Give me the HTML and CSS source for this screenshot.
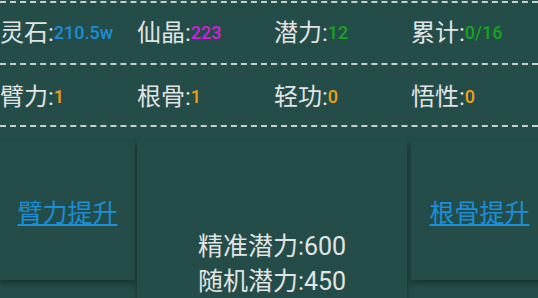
FILE: index.html
```html
<!DOCTYPE html>
<html lang="zh-CN">
<head>
    <meta charset="UTF-8">
    <meta name="viewport" content="width=device-width, initial-scale=1.0">
    <title>修炼</title>
    <link rel="stylesheet" href="styles.css">
</head>
<body>
    <div class="stats">
        <div class="row first">
            <div class="cell">灵石:<span class="val blue">210.5w</span></div>
            <div class="cell">仙晶:<span class="val purple">223</span></div>
            <div class="cell">潜力:<span class="val green">12</span></div>
            <div class="cell">累计:<span class="val green">0/16</span></div>
        </div>
        <div class="row">
            <div class="cell">臂力:<span class="val orange">1</span></div>
            <div class="cell">根骨:<span class="val orange">1</span></div>
            <div class="cell">轻功:<span class="val orange">0</span></div>
            <div class="cell">悟性:<span class="val orange">0</span></div>
        </div>
    </div>

    <div class="cards">
        <div class="card side">
            <a href="#">臂力提升</a>
        </div>
        <div class="card middle">
            <p>精准潜力:600</p>
            <p>随机潜力:450</p>
        </div>
        <div class="card side right">
            <a href="#">根骨提升</a>
        </div>
    </div>
</body>
</html>
```

FILE: styles.css
```css
body {
    margin: 0;
    background-color: #244d49;
    color: #e2e4e3;
    font-family: Roboto, "Noto Sans CJK SC", sans-serif;
    overflow: hidden;
}
.stats {
    border-top: 2px dashed #c8d0ce;
    margin-top: 1px;
}
.row {
    display: flex;
    height: 60px;
    align-items: center;
    border-bottom: 2px dashed #c8d0ce;
}
.row.first .cell {
    padding-bottom: 5px;
}
.cell {
    flex: none;
    width: 137px;
    font-size: 24px;
    padding-bottom: 2px;
}
.val {
    font-size: 18px;
    font-weight: 500;
    vertical-align: 2px;
}
.blue { color: #1a8ed8; }
.purple { color: #d21ee0; }
.green { color: #16a51c; }
.orange { color: #f0a014; }

.cards {
    display: flex;
    margin-top: 14px;
    align-items: flex-start;
}
.card {
    flex: none;
    background-color: #244d49;
    box-shadow: 0 3px 6px rgba(0, 0, 0, 0.35);
}
.card.side {
    width: 135px;
    height: 139px;
    display: flex;
    align-items: center;
    justify-content: center;
    padding-top: 1px;
    box-sizing: border-box;
}
.card.right {
    width: 137px;
}
.card a {
    color: #1a8ed8;
    font-size: 25px;
}
.card.middle {
    width: 270px;
    height: 200px;
    margin: 0 4px 0 2px;
    padding-top: 88px;
    text-align: center;
    box-sizing: border-box;
}
.card.middle p {
    margin: 0;
    font-size: 25px;
    line-height: 35px;
}
```
